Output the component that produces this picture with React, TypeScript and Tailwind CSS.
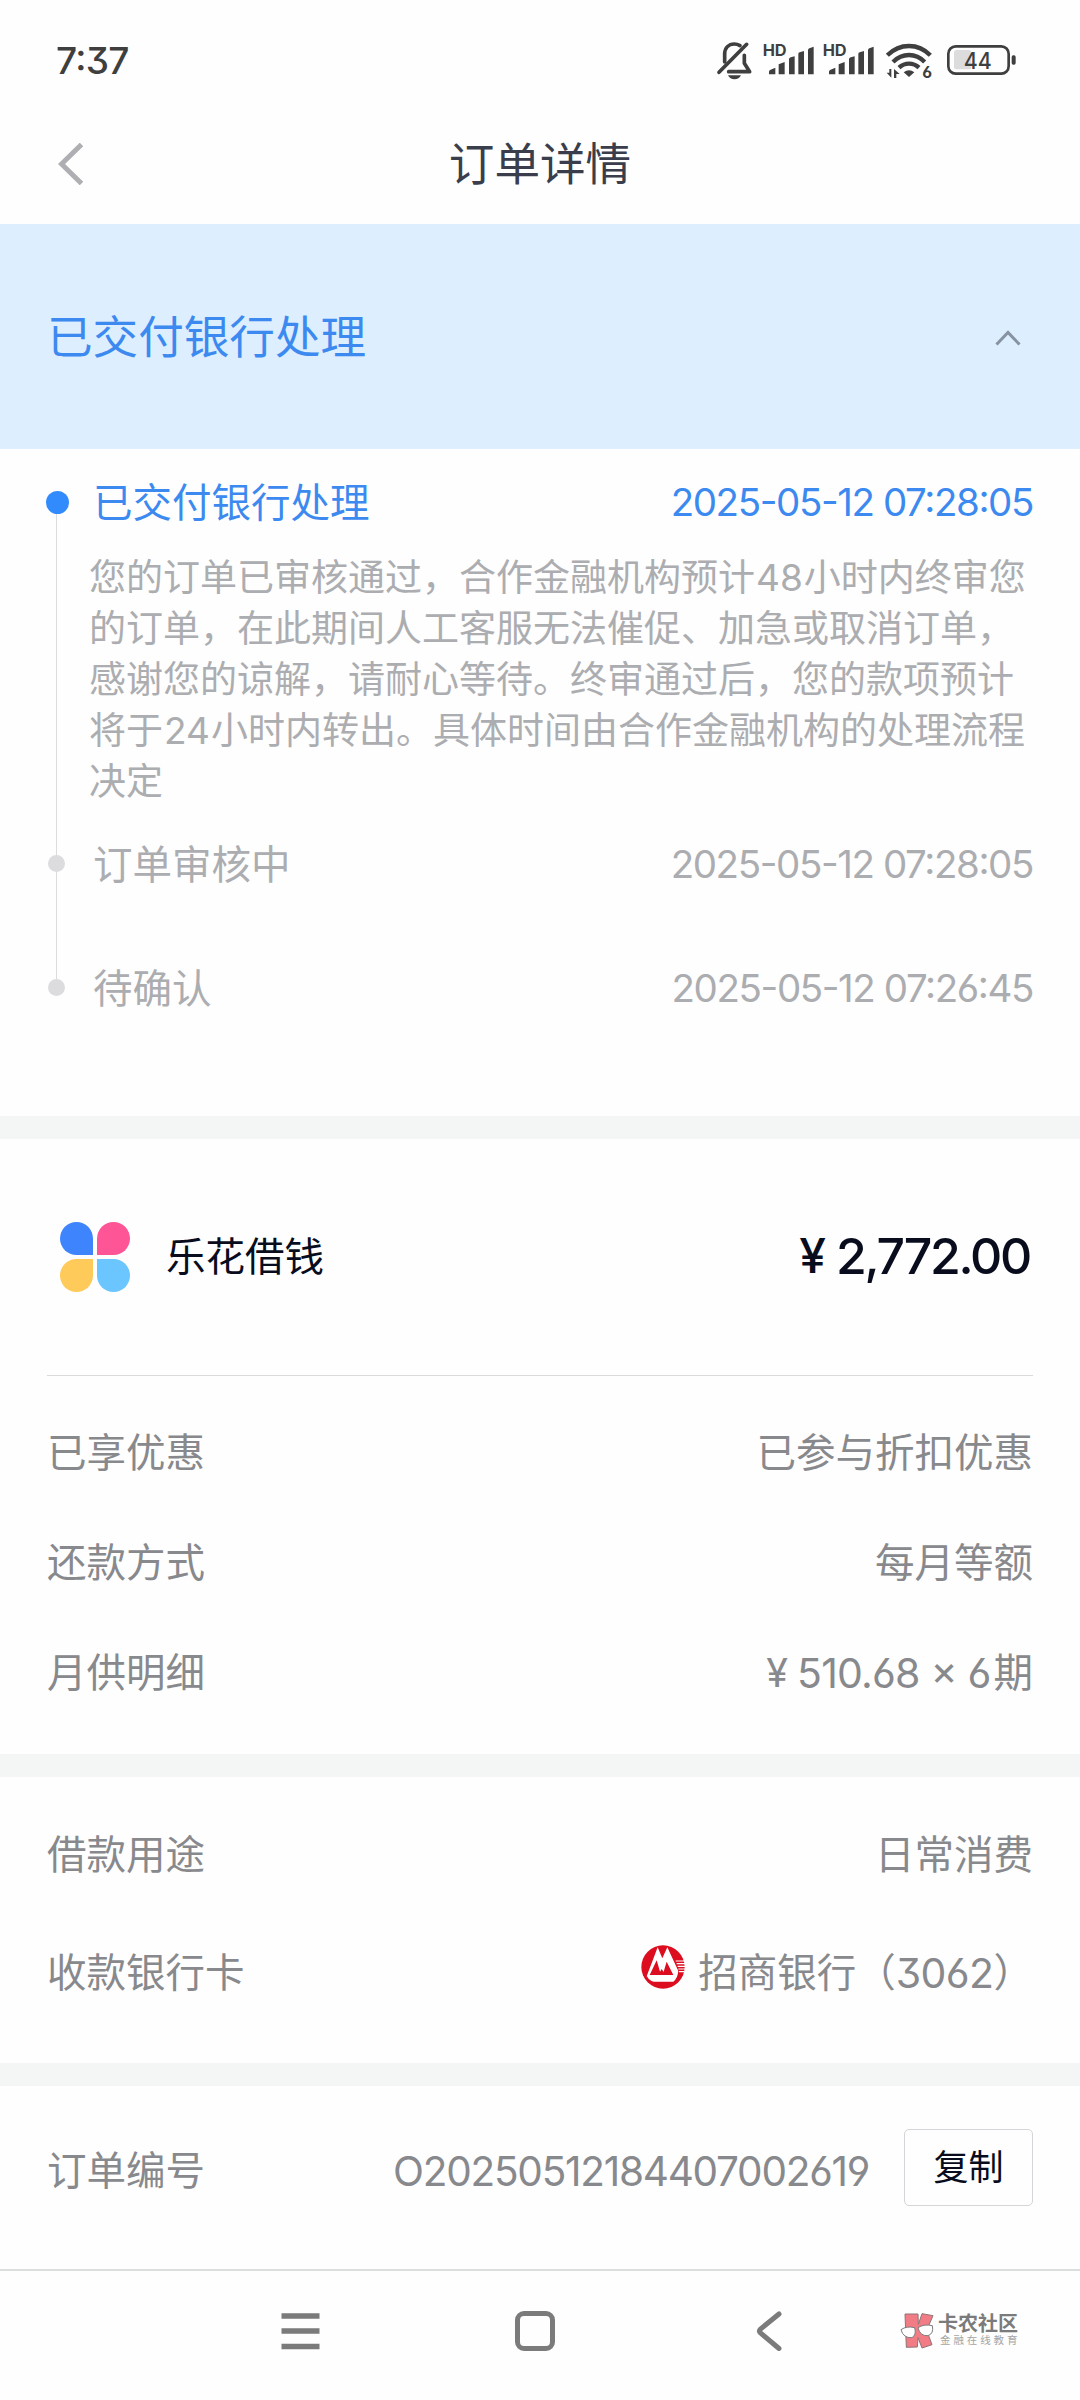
import React from 'react';

type Step = {
  title: string;
  time: string;
};

const detailLines = [
  '您的订单已审核通过，合作金融机构预计48小时内终审您',
  '的订单，在此期间人工客服无法催促、加急或取消订单，',
  '感谢您的谅解，请耐心等待。终审通过后，您的款项预计',
  '将于24小时内转出。具体时间由合作金融机构的处理流程',
  '决定',
];

const steps: Step[] = [
  { title: '订单审核中', time: '2025-05-12 07:28:05' },
  { title: '待确认', time: '2025-05-12 07:26:45' },
];

function SignalBars({ x }: { x: number }) {
  return (
    <g transform={`translate(${x} 0)`}>
      <text x="-2" y="107" fontSize="47" fontWeight="700" textLength="72" lengthAdjust="spacingAndGlyphs">
        HD
      </text>
      <path d="M17 163v-8q0-4 5-6l14-6v20zM46 163v-30l18-7v37zM77 163v-45q0-5 5-6l12-3v54zM105 163v-61q0-4 4-5l13-4v70zM134 163V91q0-5 4-6l13-5v83z" />
    </g>
  );
}

function StatusIcons() {
  return (
    <svg className="h-20 w-[310px]" viewBox="60 0 930 240" fill="#3f3f3f">
      {/* 静音 */}
      <g fill="none" stroke="#3f3f3f" strokeWidth="11" strokeLinecap="round" strokeLinejoin="round">
        <path d="M104 126V103C104 84 116 72 133 72C139 72 145 74 150 77" />
        <path d="M163 106V130L179 155H116" />
        <path d="M87 157L170 73" />
      </g>
      <path d="M114 166h39q-6 12-19.500 12t-19.500-12z" />
      <SignalBars x={220} />
      <SignalBars x={400} />
      {/* wifi */}
      <g fill="none" stroke="#3f3f3f" strokeWidth="13">
        <path d="M592 106Q620 78 657 78T721 106" />
        <path d="M609 126Q630 105 657 105T704 126" />
        <path d="M627 143Q640 131 657 131T687 143" />
      </g>
      <path d="M641 157q16-13 32 0l-16 14z" />
      <path d="M598 147h6v26l-14-15h8zM612 174v-27l17 15h-10v12z" />
      <text x="697" y="174" fontSize="48" fontWeight="700" className="[font-feature-settings:'cv03']">
        6
      </text>
      {/* 电量 */}
      <rect x="792" y="90" width="52" height="58" rx="8" fill="#dcdcdc" />
      <rect x="775" y="79" width="181" height="82" rx="22" fill="none" stroke="#3f3f3f" strokeWidth="8" />
      <rect x="965" y="106" width="12" height="28" rx="5" />
      <text x="821" y="147" fontSize="68" fontWeight="500" textLength="84" lengthAdjust="spacingAndGlyphs">
        44
      </text>
    </svg>
  );
}

function AppLogo() {
  return (
    <div className="grid h-[70px] w-[70px] grid-cols-2 gap-1">
      <span className="rounded-full rounded-br-[5px] bg-[#3d84fd]" />
      <span className="rounded-full rounded-bl-[5px] bg-[#fd5596]" />
      <span className="rounded-full rounded-tr-[5px] bg-[#fecb5b]" />
      <span className="rounded-full rounded-tl-[5px] bg-[#6bc5fe]" />
    </div>
  );
}

function BankLogo() {
  return (
    <svg className="mb-[14px] h-11 w-11" viewBox="0 0 132 132">
      <circle cx="66" cy="66" r="65" fill="#dd0d20" />
      <path d="M17 94L50 7L64 40L79 7L112 78Q110 100 97 110H38Q24 106 19 95z" fill="#fff" />
      <path d="M26 90L47 46L60 90zM65 90L77 50L97 90z" fill="#dd0d20" />
      <path d="M51 90L62 72L74 90z" fill="#dd0d20" />
      <path d="M104 48H130M107 56H132M110 64H132M112 72H132M114 80H130" stroke="#fff" strokeWidth="3.500" />
    </svg>
  );
}

// 数字两侧留一点空隙
function DetailLine({ text }: { text: string }) {
  return (
    <span className="block">
      {text.split(/(\d+)/).map((part, i) =>
        /^\d+$/.test(part) ? <span key={i} className="mx-px">{part}</span> : part
      )}
    </span>
  );
}

function Row({ label, children }: { label: string; children: React.ReactNode }) {
  return (
    <div className="flex h-[110px] items-center justify-between">
      <span>{label}</span>
      <span className="flex items-center">{children}</span>
    </div>
  );
}

function Gap() {
  return <div className="h-[23px] shrink-0 bg-[#f4f6f6]" />;
}

function Watermark() {
  return (
    <div className="flex items-center">
      <svg className="h-9 w-[38px]" viewBox="0 0 114 108">
        <g fill="#f27c86" stroke="#8d7476" strokeWidth="3" strokeLinejoin="round">
          <path d="M15 3L54 3L55 34L66 2L99 8L80 52L96 95L66 105L54 74L52 102L19 103z" />
        </g>
        <g fill="#fefefe" stroke="#7d7d7d" strokeWidth="3">
          <path d="M3 50Q20 38 44 44Q50 66 36 74Q10 76 3 50z" />
          <path d="M54 44Q72 32 97 38Q102 62 84 68Q60 70 54 44z" />
        </g>
      </svg>
      <div className="flex flex-col">
        <span className="text-[20px] leading-[20px] font-bold text-[#7b7b7b]">卡农社区</span>
        <span className="pl-0.5 text-[10.500px] leading-[14px] tracking-[2.900px] text-[#a5a5a5]">金融在线教育</span>
      </div>
    </div>
  );
}

function App() {
  return (
    <div className="flex h-[2400px] w-[1080px] flex-col bg-[#fefefe] text-[39.500px] whitespace-nowrap text-[#88898d] [font-family:Inter,'Noto_Sans_CJK_SC',sans-serif] [font-feature-settings:'cv03','cv04','cv09','calt']">
      <div className="flex h-[120px] items-center justify-between pr-[60px] pl-[56px]">
        <span className="pt-px text-[37px] font-medium tracking-[-0.700px] text-[#3f3f3f]">7:37</span>
        <StatusIcons />
      </div>

      <header className="grid h-[104px] grid-cols-[1fr_auto_1fr] items-center pb-[14px]">
        <svg className="mb-[3px] ml-[58px] h-[42px] w-[26px]" viewBox="0 0 26 42" fill="none" stroke="#aeaeb3" strokeWidth="5">
          <path d="M23.500 1.500L3.500 21L23.500 40.500" />
        </svg>
        <h1 className="text-[45.600px] text-[#3a3e4c]">订单详情</h1>
      </header>

      <div className="flex h-[225px] items-center justify-between bg-[#ddeefe] pt-[3px] pr-[59px] pl-[47px]">
        <h2 className="text-[45.600px] text-[#3c8af0]">已交付银行处理</h2>
        <svg className="h-4 w-[26px]" viewBox="0 0 26 16" fill="none" stroke="#8793a0" strokeWidth="3">
          <path d="M1.500 14.500L13 2.500L24.500 14.500" />
        </svg>
      </div>

      <section className="relative h-[667px] pr-[47px] pl-[45px]">
        <div className="absolute top-[53px] left-[56px] h-[486px] w-px bg-[#dcdcde]" />
        <div className="relative flex h-[106px] items-center text-[#3c8af0]">
          <span className="ml-px h-[23px] w-[23px] rounded-full bg-[#318bfd]" />
          <span className="ml-[24px] flex-1 pt-1">已交付银行处理</span>
          <span className="pt-0.5 text-[38.500px] tracking-[-1.400px]">2025-05-12 07:28:05</span>
        </div>
        <p className="-mt-[3px] h-[255px] pl-[44px] text-[37px] leading-[51px] text-[#acadb0]">
          {detailLines.map((line) => (
            <DetailLine key={line} text={line} />
          ))}
        </p>
        {steps.map((step) => (
          <div key={step.title} className="relative flex h-[124px] items-center pb-[11px] text-[#acadb0]">
            <span className="ml-[3px] h-[17px] w-[17px] rounded-full bg-[#dcdcde]" />
            <span className="ml-[28px] flex-1 pt-1">{step.title}</span>
            <span className="pt-0.5 text-[38.500px] tracking-[-1.400px]">{step.time}</span>
          </div>
        ))}
      </section>

      <Gap />

      <section className="h-[615px] px-[47px]">
        <div className="flex h-[237px] items-center border-b border-[#d9dadc] pr-[3px] pl-[13px] text-[#080c1c]">
          <AppLogo />
          <span className="ml-9 flex-1 pt-0.5">乐花借钱</span>
          <span className="mr-2.5 pb-0.5 text-[48px] font-medium">¥</span>
          <span className="pb-0.5 text-[50px] font-medium tracking-[-2.300px]">2,772.00</span>
        </div>
        <div className="pt-[23px]">
          <Row label="已享优惠">已参与折扣优惠</Row>
          <Row label="还款方式">每月等额</Row>
          <Row label="月供明细">
            <span className="mr-[9px]">¥</span>
            <span className="mr-[3px] text-[41px] tracking-[-0.800px]">510.68 × 6</span>期
          </Row>
        </div>
      </section>

      <Gap />

      <section className="flex h-[286px] flex-col gap-2 px-[47px] pt-[24px]">
        <Row label="借款用途">日常消费</Row>
        <Row label="收款银行卡">
          <BankLogo />
          <span className="ml-[13px]">招商银行（</span>
          <span className="text-[41px] tracking-[-0.600px]">3062</span>）
        </Row>
      </section>

      <Gap />

      <section className="flex h-[183px] items-center px-[47px] pb-[17px]">
        <span className="flex-1 pt-[5px]">订单编号</span>
        <span className="pt-[6px] text-[40.500px] tracking-[-1.250px]">O20250512184407002619</span>
        <button className="mb-[3px] ml-[35px] h-[77px] w-[129px] rounded-[5px] border border-[#d4d5d8] text-[35px] text-[#080c1c]">
          复制
        </button>
      </section>

      <nav className="h-[131px] border-t-2 border-[#dadedd]">
        <div className="flex h-[120px] items-center pl-[281px]">
          <svg className="h-[38px] w-[39px]" viewBox="0 0 39 38" fill="none" stroke="#7b7b7b" strokeWidth="5.500">
            <path d="M0.500 4H38.500M0.500 19H38.500M0.500 34.500H38.500" />
          </svg>
          <span className="ml-[195px] h-10 w-10 rounded-[9px] border-[5px] border-[#7b7b7b]" />
          <svg className="ml-[201px] h-10 w-[26px]" viewBox="0 0 26 40" fill="none" stroke="#7b7b7b" strokeWidth="5" strokeLinecap="round">
            <path d="M23 3L4.500 18Q2.500 20 4.500 22L23 37.500" />
          </svg>
          <div className="ml-[118px]">
            <Watermark />
          </div>
        </div>
      </nav>
    </div>
  );
}

export default App;
